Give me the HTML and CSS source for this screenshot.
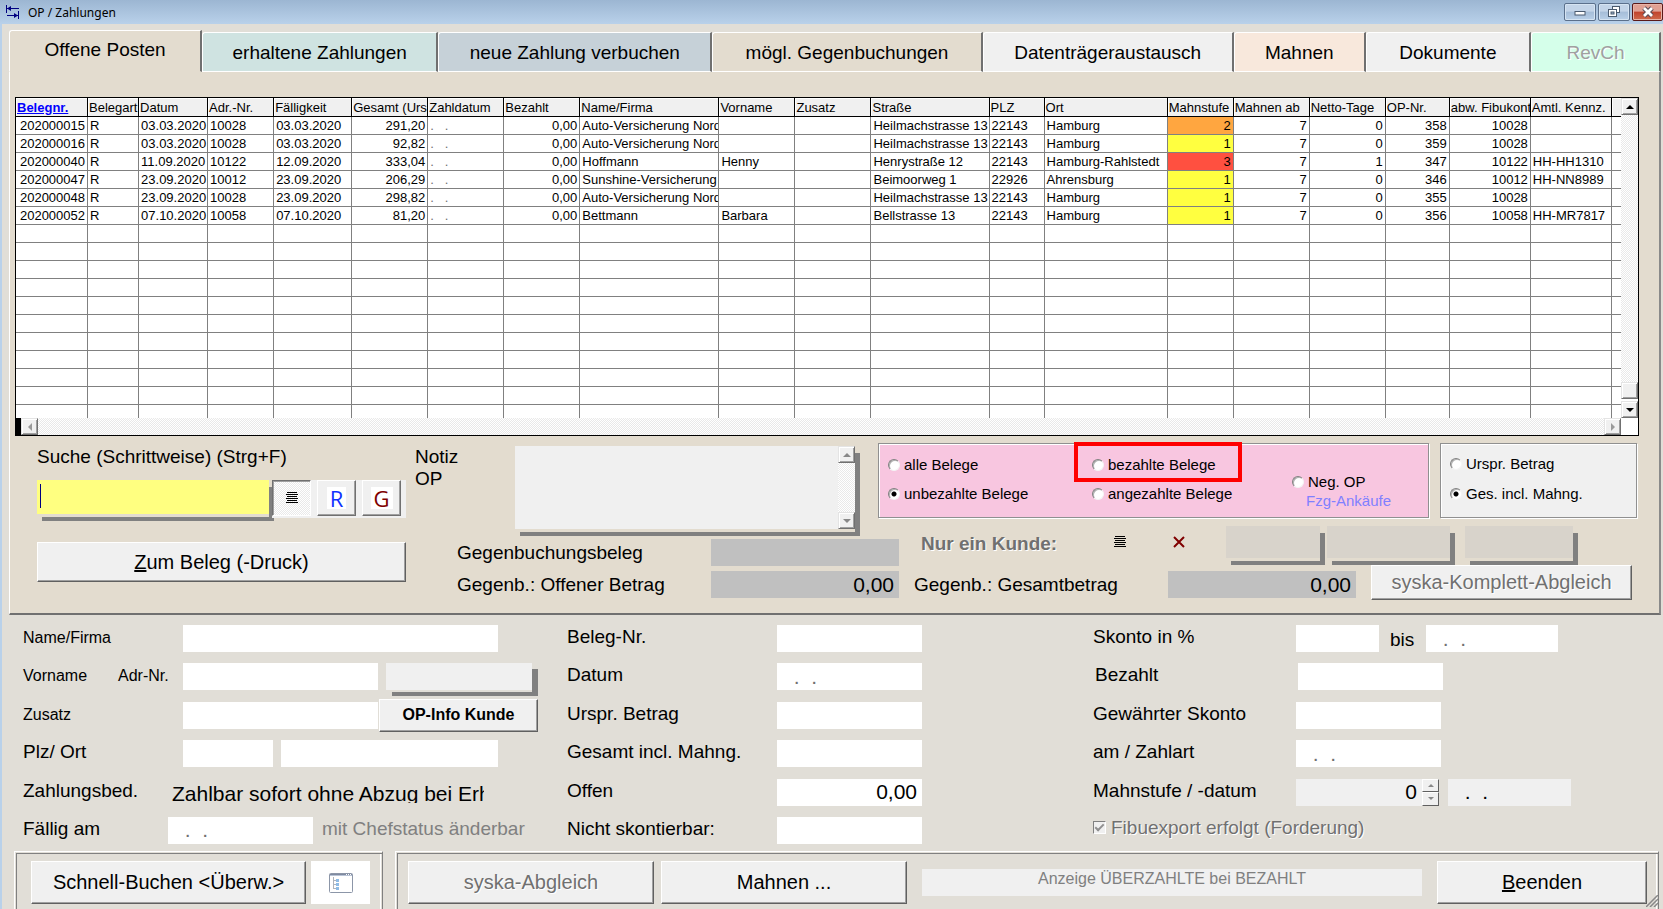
FILE: index.html
```html
<!DOCTYPE html>
<html lang="de">
<head>
<meta charset="utf-8">
<title>OP / Zahlungen</title>
<link rel="stylesheet" href="styles.css">
</head>
<body>
<div class="window">
  <header class="titlebar">
    <svg class="title-icon" width="14" height="14" viewBox="0 0 14 14" fill="none" stroke="#000080"><path d="M.5 0V8M1 3.500H12M13 3.500H11M12.500 6V14M1 10.500H12" /><path d="M1 3.500L5 1V6ZM12 10.500L8 8V13Z" fill="#000080" stroke="none"/></svg>
    <h1 class="title">OP / Zahlungen</h1>
    <div class="win-buttons">
      <button class="win-btn" aria-label="Minimieren"><svg width="12" height="12" viewBox="0 0 12 12"><rect x="1" y="5.500" width="10" height="3.500" fill="#fff" stroke="#4a5a6e"/></svg></button>
      <button class="win-btn" aria-label="Wiederherstellen"><svg width="14" height="14" viewBox="0 0 14 14" fill="#fff" stroke="#4a5a6e"><rect x="5.500" y="1.500" width="7" height="6"/><rect x="1.500" y="4.500" width="8" height="7"/><rect x="4" y="7" width="3" height="2" fill="#9fb6cf"/></svg></button>
      <button class="win-btn win-close" aria-label="Schließen"><svg width="14" height="12" viewBox="0 0 14 12"><path d="M3 2L11 10M11 2L3 10" stroke="#5a4a55" stroke-width="4.800"/><path d="M3 2L11 10M11 2L3 10" stroke="#fff" stroke-width="2.800"/></svg></button>
    </div>
  </header>

  <nav class="tabs" role="tablist">
    <button class="tab tab-active" role="tab" aria-selected="true">Offene Posten</button>
    <button class="tab tab-received" role="tab">erhaltene Zahlungen</button>
    <button class="tab tab-new" role="tab">neue Zahlung verbuchen</button>
    <button class="tab tab-counter" role="tab">mögl. Gegenbuchungen</button>
    <button class="tab tab-dta" role="tab">Datenträgeraustausch</button>
    <button class="tab tab-dunning" role="tab">Mahnen</button>
    <button class="tab tab-docs" role="tab">Dokumente</button>
    <button class="tab tab-rev" role="tab" disabled>RevCh</button>
  </nav>

  <main class="panel">
    <div class="grid-box">
      <table class="grid">
        <colgroup>
          <col class="w72"><col class="w51"><col class="w69"><col class="w66"><col class="w78"><col class="w76"><col class="w76"><col class="w76"><col class="w139"><col class="w76"><col class="w76"><col class="w118"><col class="w55"><col class="w123"><col class="w66"><col class="w76"><col class="w76"><col class="w64"><col class="w81"><col class="w81"><col class="w9">
        </colgroup>
        <thead>
          <tr><th class="sorted">Belegnr.</th><th>Belegart</th><th>Datum</th><th>Adr.-Nr.</th><th>Fälligkeit</th><th>Gesamt (Urspr.)</th><th>Zahldatum</th><th>Bezahlt</th><th>Name/Firma</th><th>Vorname</th><th>Zusatz</th><th>Straße</th><th>PLZ</th><th>Ort</th><th>Mahnstufe</th><th>Mahnen ab</th><th>Netto-Tage</th><th>OP-Nr.</th><th>abw. Fibukonto</th><th>Amtl. Kennz.</th><th></th></tr>
        </thead>
        <tbody>
          <tr><td class="num">202000015</td><td>R</td><td>03.03.2020</td><td>10028</td><td>03.03.2020</td><td class="num">291,20</td><td class="dots">.   .</td><td class="num">0,00</td><td>Auto-Versicherung Nord</td><td></td><td></td><td>Heilmachstrasse 13</td><td>22143</td><td>Hamburg</td><td class="num level-2">2</td><td class="num">7</td><td class="num">0</td><td class="num">358</td><td class="num">10028</td><td></td><td></td></tr>
          <tr><td class="num">202000016</td><td>R</td><td>03.03.2020</td><td>10028</td><td>03.03.2020</td><td class="num">92,82</td><td class="dots">.   .</td><td class="num">0,00</td><td>Auto-Versicherung Nord</td><td></td><td></td><td>Heilmachstrasse 13</td><td>22143</td><td>Hamburg</td><td class="num level-1">1</td><td class="num">7</td><td class="num">0</td><td class="num">359</td><td class="num">10028</td><td></td><td></td></tr>
          <tr><td class="num">202000040</td><td>R</td><td>11.09.2020</td><td>10122</td><td>12.09.2020</td><td class="num">333,04</td><td class="dots">.   .</td><td class="num">0,00</td><td>Hoffmann</td><td>Henny</td><td></td><td>Henrystraße 12</td><td>22143</td><td>Hamburg-Rahlstedt</td><td class="num level-3">3</td><td class="num">7</td><td class="num">1</td><td class="num">347</td><td class="num">10122</td><td>HH-HH1310</td><td></td></tr>
          <tr><td class="num">202000047</td><td>R</td><td>23.09.2020</td><td>10012</td><td>23.09.2020</td><td class="num">206,29</td><td class="dots">.   .</td><td class="num">0,00</td><td>Sunshine-Versicherung</td><td></td><td></td><td>Beimoorweg 1</td><td>22926</td><td>Ahrensburg</td><td class="num level-1">1</td><td class="num">7</td><td class="num">0</td><td class="num">346</td><td class="num">10012</td><td>HH-NN8989</td><td></td></tr>
          <tr><td class="num">202000048</td><td>R</td><td>23.09.2020</td><td>10028</td><td>23.09.2020</td><td class="num">298,82</td><td class="dots">.   .</td><td class="num">0,00</td><td>Auto-Versicherung Nord</td><td></td><td></td><td>Heilmachstrasse 13</td><td>22143</td><td>Hamburg</td><td class="num level-1">1</td><td class="num">7</td><td class="num">0</td><td class="num">355</td><td class="num">10028</td><td></td><td></td></tr>
          <tr><td class="num">202000052</td><td>R</td><td>07.10.2020</td><td>10058</td><td>07.10.2020</td><td class="num">81,20</td><td class="dots">.   .</td><td class="num">0,00</td><td>Bettmann</td><td>Barbara</td><td></td><td>Bellstrasse 13</td><td>22143</td><td>Hamburg</td><td class="num level-1">1</td><td class="num">7</td><td class="num">0</td><td class="num">356</td><td class="num">10058</td><td>HH-MR7817</td><td></td></tr>
          <tr class="blank"><td></td><td></td><td></td><td></td><td></td><td></td><td></td><td></td><td></td><td></td><td></td><td></td><td></td><td></td><td></td><td></td><td></td><td></td><td></td><td></td><td></td></tr>
        </tbody>
      </table>
      <div class="vscroll">
        <button class="sb" aria-label="Nach oben"><svg width="8" height="4" viewBox="0 0 8 4"><path d="M0 4L4 0L8 4Z" fill="#000"/></svg></button>
        <div class="track"></div>
        <div class="sb thumb"></div>
        <button class="sb" aria-label="Nach unten"><svg width="8" height="4" viewBox="0 0 8 4"><path d="M0 0L4 4L8 0Z" fill="#000"/></svg></button>
      </div>
      <div class="hscroll">
        <div class="split"></div>
        <button class="sb" aria-label="Nach links"><svg width="4" height="8" viewBox="0 0 4 8"><path d="M4 0L0 4L4 8Z" fill="#999"/></svg></button>
        <div class="track"></div>
        <button class="sb" aria-label="Nach rechts"><svg width="4" height="8" viewBox="0 0 4 8"><path d="M0 0L4 4L0 8Z" fill="#999"/></svg></button>
      </div>
    </div>

    <div class="tools">
      <section class="search">
        <label class="lbl" for="suche">Suche (Schrittweise) (Strg+F)</label>
        <div class="search-row">
          <input class="search-input shadowed" id="suche" type="text">
          <div class="strip">
            <button class="tool pressed" aria-label="Liste"><svg width="12" height="12" viewBox="0 0 12 12"><path d="M1 .5H11M0 2.500H12M1 4.500H11M0 6.500H12M1 8.500H11M0 10.500H12" stroke="#000"/></svg></button>
            <button class="tool tool-r"><span class="letter">R</span></button>
            <button class="tool tool-g"><span class="letter">G</span></button>
          </div>
        </div>
        <button class="btn btn-print"><span><u>Z</u>um Beleg (-Druck)</span></button>
      </section>

      <section class="detail">
        <div class="detail-top">
          <label class="lbl note-lbl" for="notiz">Notiz<br>OP</label>
          <div class="note shadowed">
            <textarea class="note-text" id="notiz"></textarea>
            <div class="note-scroll">
              <button class="sb" aria-label="Notiz nach oben"><svg width="8" height="4" viewBox="0 0 8 4"><path d="M0 4L4 0L8 4Z" fill="#888"/></svg></button>
              <div class="track"></div>
              <button class="sb" aria-label="Notiz nach unten"><svg width="8" height="4" viewBox="0 0 8 4"><path d="M0 0L4 4L8 0Z" fill="#888"/></svg></button>
            </div>
          </div>
          <div class="etched filter">
            <div class="filter-col filter-a">
              <label class="opt"><input type="radio" name="filter">alle Belege</label>
              <label class="opt"><input type="radio" name="filter" checked>unbezahlte Belege</label>
            </div>
            <div class="filter-col filter-b">
              <label class="opt marked"><input type="radio" name="filter">bezahlte Belege</label>
              <label class="opt"><input type="radio" name="filter">angezahlte Belege</label>
            </div>
            <div class="filter-col filter-c">
              <label class="opt"><input type="radio" name="filter">Neg. OP</label>
              <span class="fzg">Fzg-Ankäufe</span>
            </div>
          </div>
          <div class="etched amount">
            <label class="opt"><input type="radio" name="betrag">Urspr. Betrag</label>
            <label class="opt"><input type="radio" name="betrag" checked>Ges. incl. Mahng.</label>
          </div>
        </div>

        <div class="detail-bottom">
          <div class="counter">
            <label class="lbl" for="gbb">Gegenbuchungsbeleg</label>
            <input class="gray-field" id="gbb" type="text" readonly>
            <label class="lbl" for="gbo">Gegenb.: Offener Betrag</label>
            <input class="gray-field" id="gbo" type="text" value="0,00" readonly>
          </div>
          <div class="customer">
            <div class="customer-row">
              <span class="only">Nur ein Kunde:</span>
              <button class="flat" aria-label="Kunde wählen"><svg width="12" height="12" viewBox="0 0 12 12"><path d="M1 .5H11M0 2.500H12M1 4.500H11M0 6.500H12M1 8.500H11M0 10.500H12" stroke="#000"/></svg></button>
              <button class="flat flat-x" aria-label="Kunde entfernen"><svg width="12" height="12" viewBox="0 0 12 12"><path d="M1 1L11 11M11 1L1 11" stroke="#800000" stroke-width="2"/></svg></button>
              <input class="cust-field shadowed cf-1" type="text" aria-label="Kundennummer" disabled>
              <input class="cust-field shadowed cf-2" type="text" aria-label="Kundenname" disabled>
              <input class="cust-field shadowed cf-3" type="text" aria-label="Kundenvorname" disabled>
            </div>
            <div class="total-row">
              <label class="lbl total-lbl" for="gbg">Gegenb.: Gesamtbetrag</label>
              <input class="gray-field" id="gbg" type="text" value="0,00" readonly>
              <button class="btn btn-komplett" disabled>syska-Komplett-Abgleich</button>
            </div>
          </div>
        </div>
      </section>
    </div>
  </main>

  <form class="form">
    <div class="col col-1">
      <div class="row"><label class="small" for="nf">Name/Firma</label><input class="field grow" id="nf" type="text"></div>
      <div class="row"><label class="small part" for="vn">Vorname</label><label class="small rest" for="an">Adr-Nr.</label><input class="field f195" id="vn" type="text"><input class="field-gray shadowed adr" id="an" type="text"></div>
      <div class="row"><label class="small" for="zs">Zusatz</label><input class="field f195" id="zs" type="text"><button class="btn btn-info" type="button">OP-Info Kunde</button></div>
      <div class="row"><label for="plz">Plz/ Ort</label><input class="field f90" id="plz" type="text"><input class="field ort" id="ort" type="text" aria-label="Ort"></div>
      <div class="row"><span class="rl">Zahlungsbed.</span><span class="terms">Zahlbar sofort ohne Abzug bei Erhalt</span></div>
      <div class="row"><label class="due" for="fa">Fällig am</label><input class="field f145 date" id="fa" type="text" value="&nbsp;&nbsp;.&nbsp;&nbsp;."><span class="hint">mit Chefstatus änderbar</span></div>
    </div>
    <div class="col col-2">
      <div class="row"><label for="bn">Beleg-Nr.</label><input class="field f145" id="bn" type="text"></div>
      <div class="row"><label for="dt">Datum</label><input class="field f145 date" id="dt" type="text" value="&nbsp;&nbsp;.&nbsp;&nbsp;."></div>
      <div class="row"><label for="ub">Urspr. Betrag</label><input class="field f145" id="ub" type="text"></div>
      <div class="row"><label for="gi">Gesamt incl. Mahng.</label><input class="field f145" id="gi" type="text"></div>
      <div class="row"><label for="of">Offen</label><input class="field f145 right" id="of" type="text" value="0,00"></div>
      <div class="row"><label for="ns">Nicht skontierbar:</label><input class="field f145" id="ns" type="text"></div>
    </div>
    <div class="col col-3">
      <div class="row"><label for="sk">Skonto in %</label><input class="field f83" id="sk" type="text"><label class="until" for="sb">bis</label><input class="field f132 date" id="sb" type="text" value="&nbsp;&nbsp;.&nbsp;&nbsp;."></div>
      <div class="row paid"><label for="bz">Bezahlt</label><input class="field f145" id="bz" type="text"></div>
      <div class="row"><label for="gs">Gewährter Skonto</label><input class="field f145" id="gs" type="text"></div>
      <div class="row"><label for="za">am / Zahlart</label><input class="field f145 date" id="za" type="text" value="&nbsp;&nbsp;.&nbsp;&nbsp;."></div>
      <div class="row"><label for="ms">Mahnstufe / -datum</label><input class="field-gray level right" id="ms" type="text" value="0"><span class="spin"><button type="button" aria-label="Mehr"><svg width="6" height="3" viewBox="0 0 6 3"><path d="M0 3L3 0L6 3Z" fill="#888"/></svg></button><button type="button" aria-label="Weniger"><svg width="6" height="3" viewBox="0 0 6 3"><path d="M0 0L3 3L6 0Z" fill="#888"/></svg></button></span><input class="field-gray date-dark" type="text" aria-label="Mahndatum" value="&nbsp;&nbsp;.&nbsp;&nbsp;."></div>
      <div class="row"><label class="export"><input type="checkbox" checked disabled>Fibuexport erfolgt (Forderung)</label></div>
    </div>
  </form>

  <footer class="footer">
    <div class="group group-a">
      <button class="btn quick">Schnell-Buchen &lt;Überw.&gt;</button>
      <button class="icon-btn" aria-label="Ansicht"><svg width="24" height="20" viewBox="0 0 24 20"><rect x=".5" y=".5" width="23" height="19" rx="1" fill="#fff" stroke="#8c96a8"/><path d="M1 1.500H23" stroke="#7f8aa0"/><path d="M1 2.500H23" stroke="#b9c4d6"/><path d="M17 1.500H22" stroke="#fff" stroke-dasharray="1 1"/><path d="M4.500 4V16M4.500 7.500H7M4.500 11.500H7M4.500 15.500H7" fill="none" stroke="#b0b4bc"/><path d="M7 6h3v3h-3zM7 10h3v3h-3zM7 14h3v3h-3z" fill="#8fbce6"/></svg></button>
    </div>
    <div class="group group-b">
      <button class="btn b-abgleich" disabled>syska-Abgleich</button>
      <button class="btn b-mahnen">Mahnen ...</button>
      <div class="status">Anzeige ÜBERZAHLTE bei BEZAHLT</div>
      <button class="btn b-end"><span><u>B</u>eenden</span></button>
      <svg class="grip" width="12" height="12" viewBox="0 0 12 12"><path d="M0 12L12 0M4 12L12 4M8 12L12 8" stroke="#888" stroke-width="1.500"/></svg>
    </div>
  </footer>
</div>
</body>
</html>
```

FILE: styles.css
```css
:root {
  --panel: #e3dccf;
  --form: #e1ded7;
  --face: #f0f0f0;
  --shade: #808080;
  --dither: repeating-conic-gradient(#e9e9e9 0 25%, #fff 0 50%) 0 0 / 2px 2px;
}
*, *::before, *::after { box-sizing: border-box; }
html, body { margin: 0; height: 100%; overflow: hidden; }
body {
  background: var(--form);
  font-family: "Liberation Sans", Arial, sans-serif;
  font-size: 19px;
  color: #000;
}
button, input, textarea {
  font: inherit;
  color: inherit;
  margin: 0;
  padding: 0;
  border: 0;
  border-radius: 0;
  outline: 0;
  min-width: 0;
}
svg { display: block; }
.window {
  height: 100vh;
  display: flex;
  flex-direction: column;
  border-left: 2px solid #b9d1ea;
}

/* Title bar */
.titlebar {
  flex: none;
  height: 24px;
  margin-left: -2px;
  padding-left: 6px;
  display: flex;
  align-items: center;
  background: linear-gradient(#9cb6d2, #b9d1ea);
}
.title {
  margin: 0 auto 0 8px;
  font: 12px/24px "Noto Sans", "Open Sans", sans-serif;
  padding-top: 2px;
}
.win-buttons { display: flex; gap: 2px; }
.win-btn {
  width: 32px;
  height: 18px;
  display: flex;
  align-items: center;
  justify-content: center;
  background: linear-gradient(#c3d4e8 45%, #a5bdd8 50%, #b9d0e8);
  border: 1px solid #5b708c;
  border-radius: 2px;
  box-shadow: inset 0 0 0 1px #d6e4f2;
}
.win-close {
  width: 31px;
  background: linear-gradient(#e0a093 45%, #c1432d 50%, #cf6a4c);
  border-color: #5a1a1a;
  box-shadow: inset 0 0 0 1px #e8b4a8;
}

/* Tabs */
.tabs {
  flex: none;
  display: flex;
  align-items: flex-end;
  padding: 6px 2px 0 7px;
}
.tab {
  flex: 1 1 0;
  height: 40px;
  padding-top: 2px;
  border-top: 1px solid #fff;
  border-left: 1px solid #fff;
  border-right: 2px solid #707070;
  border-bottom: 1px solid #fff;
  border-radius: 3px 0 0 0;
  background: var(--face);
  white-space: nowrap;
}
.tab-active { flex-grow: 190; height: 42px; background: var(--panel); border-bottom-color: var(--panel); padding: 0 0 2px; }
.tab-received { flex-grow: 233; background: #cfe3e1; }
.tab-new { flex-grow: 271; background: #c6d1d8; }
.tab-counter { flex-grow: 267; background: var(--panel); }
.tab-dta { flex-grow: 248; }
.tab-dunning { flex-grow: 129; background: #f8e8dc; }
.tab-docs { flex-grow: 162; }
.tab-rev { flex-grow: 127; background: #d5ffea; color: #a0a0a0; text-shadow: 1px 1px 0 #fff; }

.panel {
  flex: none;
  margin: 0 2px 0 7px;
  padding: 25px 20px 13px 5px;
  background: var(--panel);
  border-left: 1px solid #fff;
  border-right: 2px solid #8a8a8a;
  border-bottom: 2px solid #707070;
}

/* Data grid */
.grid-box {
  display: grid;
  grid-template-columns: 1fr 17px;
  grid-template-rows: auto 17px;
  border: 1px solid #000;
  background: #fff;
}
.grid {
  width: 100%;
  table-layout: fixed;
  border-collapse: separate;
  border-spacing: 0;
  font-size: 13px;
  line-height: 17px;
}
.w72 { width: 72px; } .w51 { width: 51px; } .w69 { width: 69px; } .w66 { width: 66px; }
.w78 { width: 78px; } .w76 { width: 76px; } .w139 { width: 139px; } .w118 { width: 118px; }
.w55 { width: 55px; } .w123 { width: 123px; } .w64 { width: 64px; } .w81 { width: 81px; }
.w9 { width: 9px; }
.grid th {
  height: 19px;
  padding: 0 0 0 1px;
  background: var(--face);
  border-right: 1px solid #000;
  border-bottom: 1px solid #000;
  box-shadow: inset 1px 1px 0 #fff;
  font-weight: 400;
  text-align: left;
  white-space: nowrap;
  overflow: hidden;
}
.grid .sorted { color: #0000ff; font-weight: 700; text-decoration: underline; }
.grid td {
  height: 18px;
  padding: 0 0 0 2px;
  border-right: 1px solid var(--shade);
  border-bottom: 1px solid var(--shade);
  white-space: pre;
  overflow: hidden;
}
.grid th:last-child, .grid td:last-child { border-right: 0; }
.grid .num { text-align: right; padding-right: 2px; }
.grid .dots { color: #707070; }
.grid .level-1 { background: #ffff40; }
.grid .level-2 { background: #ffa640; }
.grid .level-3 { background: #ff5040; }
.grid .blank td {
  height: 193px;
  border-bottom: 0;
  background: repeating-linear-gradient(transparent 0 17px, var(--shade) 17px 18px);
}
.sb {
  flex: none;
  width: 17px;
  height: 17px;
  display: flex;
  align-items: center;
  justify-content: center;
  background: var(--face);
  border: 1px solid;
  border-color: #e4e4e4 #707070 #707070 #e4e4e4;
  box-shadow: inset 1px 1px 0 #fff, inset -1px -1px 0 #a0a0a0;
}
.track { flex: 1; background: var(--dither); }
.vscroll { display: flex; flex-direction: column; }
.thumb { margin-bottom: 2px; }
.hscroll { display: flex; }
.split { width: 5px; background: #000; }

/* Search and detail area */
.tools { display: flex; padding: 7px 2px 0 22px; }
.search { width: 369px; margin-right: 9px; display: flex; flex-direction: column; }
.lbl { line-height: 27px; white-space: nowrap; }
.search-row { display: flex; margin-top: 10px; }
.search-input {
  flex: 1;
  height: 34px;
  background: linear-gradient(#000080, #000080) 3px 4px / 1px 24px no-repeat, #ffff80;
}
.shadowed { box-shadow: 0 3px 0 var(--panel), 5px 7px 0 var(--shade); }
.strip {
  position: relative;
  display: flex;
  gap: 6px;
  width: 134px;
  height: 38px;
  margin-left: 3px;
  background: var(--face);
}
.tool {
  width: 39px;
  height: 36px;
  display: flex;
  align-items: center;
  justify-content: center;
  background: var(--face);
  border: 1px solid;
  border-color: #fff #707070 #707070 #fff;
  box-shadow: inset -1px -1px 0 #a0a0a0;
}
.pressed {
  background: var(--dither);
  border-color: #707070 #fff #fff #707070;
  box-shadow: inset 1px 1px 0 #a0a0a0;
}
.letter { background: #fff; padding: 0 3px; font: 22px/22px "Open Sans", "Noto Sans", sans-serif; }
.tool-r { color: #1030ff; }
.tool-g { color: #800000; }
.btn {
  display: flex;
  align-items: center;
  justify-content: center;
  background: var(--face);
  border: 1px solid;
  border-color: #fff #606060 #606060 #fff;
  box-shadow: inset -1px -1px 0 #a0a0a0;
  font-size: 20px;
  white-space: nowrap;
}
.btn:disabled { color: #707070; text-shadow: 1px 1px 0 #fff; }
.btn-print { height: 40px; margin-top: 24px; }

.detail { flex: 1; }
.detail-top { display: flex; height: 86px; align-items: flex-start; }
.note-lbl { width: 100px; line-height: 22px; padding-top: 3px; }
.note {
  display: flex;
  width: 340px;
  height: 83px;
  margin: 3px 23px 0 0;
  background: var(--face);
}
.note-text { flex: 1; background: transparent; resize: none; }
.note-scroll { display: flex; flex-direction: column; }
.etched {
  height: 75px;
  border: 1px solid #909090;
  box-shadow: inset 1px 1px 0 #fff, 1px 1px 0 #fff;
}
.filter {
  flex: 1;
  display: flex;
  padding-left: 9px;
  background: #f8c6e0;
}
.filter-col { display: flex; flex-direction: column; gap: 9px; padding-top: 11px; }
.filter-a { width: 204px; }
.filter-b { width: 200px; }
.filter-c { gap: 0; padding-top: 28px; }
.opt {
  position: relative;
  display: flex;
  align-items: center;
  gap: 4px;
  font-size: 15px;
  line-height: 20px;
  white-space: nowrap;
}
.opt input {
  appearance: none;
  width: 12px;
  height: 12px;
  border-radius: 50%;
  background: #fff;
  border: 1px solid;
  border-color: #808080 #f4f4f4 #f4f4f4 #808080;
  box-shadow: inset 1px 1px 0 #b0b0b0;
}
.opt input:checked { background: radial-gradient(circle at 50% 50%, #000 0 2px, #fff 3px); }
.marked::after {
  content: "";
  position: absolute;
  left: -18px;
  top: -13px;
  width: 168px;
  height: 40px;
  border: 4px solid #ff0000;
}
.fzg { padding-left: 14px; font-size: 15px; line-height: 17px; color: #8080ff; }
.amount {
  width: 197px;
  margin-left: 11px;
  padding: 10px 0 0 9px;
  display: flex;
  flex-direction: column;
  gap: 10px;
  background: var(--face);
}

.detail-bottom { display: flex; margin-top: -3px; padding-left: 42px; }
.counter {
  display: grid;
  grid-template-columns: 254px 188px;
  grid-auto-rows: 27px;
  row-gap: 5px;
  padding-top: 13px;
  margin-right: 15px;
}
.gray-field {
  width: 188px;
  height: 27px;
  padding: 0 5px;
  background: #c0c0c0;
  font-size: 21px;
  text-align: right;
}
.customer { flex: 1; }
.customer-row { display: flex; height: 39px; align-items: flex-start; }
.only {
  width: 200px;
  padding-left: 7px;
  font-weight: 700;
  line-height: 36px;
  color: #707070;
  text-shadow: 1px 1px 0 #fff;
}
.flat { padding-top: 10px; background: transparent; }
.flat-x { margin: 0 41px 0 47px; }
.cust-field { height: 32px; background: #d8d3cb; }
.cf-1 { width: 94px; margin-right: 7px; }
.cf-2 { width: 123px; margin-right: 15px; }
.cf-3 { width: 108px; }
.total-row { display: flex; height: 35px; align-items: flex-end; }
.total-lbl { width: 254px; line-height: 30px; }
.total-row .gray-field { margin: 0 15px 2px 0; }
.btn-komplett { width: 261px; height: 35px; }

/* Entry form */
.form {
  flex: 1;
  min-height: 0;
  display: grid;
  grid-template-columns: 544fr 526fr 568fr;
  padding: 10px 2px 7px 21px;
}
.col { display: flex; flex-direction: column; justify-content: space-between; }
.row { display: flex; height: 27px; white-space: nowrap; }
.row > label, .rl { flex: none; line-height: 23px; }
.col-1 .row > label, .rl { width: 160px; }
.col-1 .row > .part { width: 95px; }
.col-1 .row > .rest { width: 65px; }
.col-1 .row > .due { width: 145px; }
.col-2 .row > label { width: 210px; }
.col-3 .row > label { width: 203px; }
.row > .small { font-size: 16px; line-height: 26px; }
.field { height: 27px; padding: 0 5px; background: #fff; font-size: 21px; }
.field-gray { height: 27px; padding: 0 5px; background: var(--face); font-size: 21px; }
.right { text-align: right; }
.date { color: #707070; }
.grow { width: 315px; }
.f195 { width: 195px; }
.f145 { width: 145px; }
.f132 { width: 132px; }
.f90 { width: 90px; }
.f83 { width: 83px; }
.adr {
  width: 146px;
  margin-left: 8px;
  box-shadow: 0 2px 0 var(--form), 6px 6px 0 var(--shade);
}
.ort { width: 217px; margin-left: 8px; }
.btn-info { width: 159px; height: 33px; margin: -3px 0 0 1px; font-size: 16px; font-weight: 700; }
.terms {
  width: 312px;
  height: 24px;
  margin-left: -11px;
  overflow: hidden;
  font-size: 21px;
  line-height: 29px;
}
.hint { margin-left: 9px; line-height: 23px; color: #808080; }
.col-3 .row > .until { width: 47px; padding-left: 11px; line-height: 30px; }
.paid { padding-left: 2px; }
.level { width: 126px; }
.spin { display: flex; flex-direction: column; width: 17px; margin-right: 9px; }
.spin button {
  flex: 1;
  display: flex;
  align-items: center;
  justify-content: center;
  background: var(--face);
  border: 1px solid;
  border-color: #fff #606060 #606060 #fff;
}
.date-dark { width: 123px; }
.col-3 .row > .export { display: flex; align-items: center; gap: 5px; width: auto; height: 22px; color: #707070; text-shadow: 1px 1px 0 #fff; }
.export input {
  appearance: none;
  width: 13px;
  height: 13px;
  border: 1px solid;
  border-color: #808080 #fff #fff #808080;
  background: var(--face);
  display: grid;
  place-items: center;
}
.export input::before {
  content: "";
  width: 9px;
  height: 5px;
  margin-bottom: 3px;
  border: solid #909090;
  border-width: 0 0 2px 2px;
  rotate: -45deg;
}

/* Footer */
.footer { flex: none; display: flex; gap: 12px; padding: 0 4px 0 12px; }
.group {
  display: flex;
  padding: 9px 12px 5px 16px;
  height: 58px;
  border-top: 1px solid #fff;
  border-left: 1px solid #fff;
  border-right: 1px solid var(--shade);
  box-shadow: inset 1px 1px 0 var(--form), inset 2px 2px 0 var(--shade), inset -1px 0 0 var(--form), inset -2px 0 0 #fff;
}
.group .btn { height: 43px; }
.group-a { width: 369px; }
.group-b { position: relative; flex: 1; padding-left: 12px; padding-right: 11px; }
.group .quick { width: 275px; margin-right: 5px; }
.icon-btn { width: 59px; height: 43px; display: flex; align-items: center; justify-content: center; background: #fff; }
.b-abgleich, .b-mahnen { width: 246px; margin-right: 7px; }
.status {
  flex: 1;
  height: 27px;
  margin: 8px 15px 0 8px;
  background: var(--face);
  color: #808080;
  font-size: 16px;
  line-height: 20px;
  text-align: center;
}
.b-end { width: 210px; }
.grip { position: absolute; right: 0; bottom: 2px; }
```
